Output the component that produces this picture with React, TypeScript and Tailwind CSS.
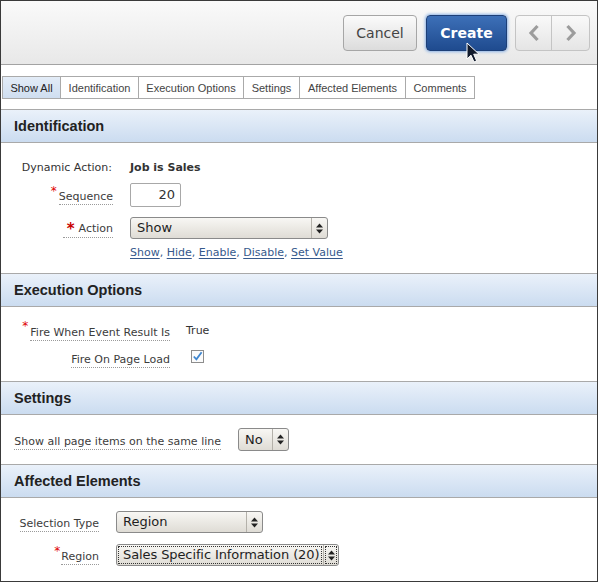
import React from "react";

function Arrows() {
  return (
    <svg width="7" height="11" viewBox="0 0 7 11" className="block">
      <path d="M0 4.5 L3.5 0.5 L7 4.5 Z" fill="#222" />
      <path d="M0 6.5 L3.5 10.5 L7 6.5 Z" fill="#222" />
    </svg>
  );
}

function Select({
  value,
  className,
  focus = false,
}: {
  value: string;
  className: string;
  focus?: boolean;
}) {
  return (
    <div
      className={`flex items-stretch rounded-[3px] border border-[#8a8a8a] bg-gradient-to-b from-[#f8f7f4] to-[#dfdcd5] text-[13px] text-[#1e1e1e] ${className}`}
    >
      <div className={`flex flex-1 items-center whitespace-nowrap ${focus ? "p-[1px]" : "overflow-hidden p-[2px]"}`}>
        <div
          className={`flex h-full w-full items-center ${focus ? "pl-[5px] tracking-[-0.1px] outline outline-1 outline-dotted outline-[#333] -outline-offset-1" : "pl-[4px]"}`}
        >
          {value}
        </div>
      </div>
      <div className={`flex items-center justify-center border-l border-[#b4b1aa] ${focus ? "w-[15px] p-[1px]" : "w-[16px] p-[2px]"}`}>
        <div
          className={`flex h-full w-full items-center justify-center ${focus ? "outline outline-1 outline-dotted outline-[#333] -outline-offset-1" : ""}`}
        >
          <Arrows />
        </div>
      </div>
    </div>
  );
}

function Star({ className }: { className: string }) {
  return (
    <span className={`absolute text-[12px] leading-none text-[#e00000] ${className}`}>*</span>
  );
}

function Field({ children }: { children: React.ReactNode }) {
  return (
    <span className="relative inline-block border-b border-dotted border-[#9a9a9a] pb-[1px] leading-[13px]">
      {children}
    </span>
  );
}

function RegionHeader({ title }: { title: string }) {
  return (
    <div className="flex h-[34px] items-center border-y border-[#a9a9a9] bg-gradient-to-b from-[#eaf1fa] to-[#cbdcf0] pl-[13px] pt-[1px] font-['Liberation_Sans',Arial,sans-serif] text-[14.5px] font-bold text-[#222]">
      {title}
    </div>
  );
}

const tabs = [
  { label: "Show All", w: "w-[57px]" },
  { label: "Identification", w: "w-[78px]" },
  { label: "Execution Options", w: "w-[105px]" },
  { label: "Settings", w: "w-[56px]" },
  { label: "Affected Elements", w: "w-[106px]" },
  { label: "Comments", w: "w-[69px]" },
];

export default function App() {
  return (
    <div className="relative flex h-[582px] w-[598px] flex-col overflow-hidden border border-[#3a3a3a] bg-white font-['DejaVu_Sans',sans-serif] text-[11px] text-[#3c3c3c]">
      {/* button bar */}
      <div className="flex h-[64px] items-center justify-end gap-[8px] border-b border-[#a3a3a3] bg-gradient-to-b from-[#fafafa] to-[#e8e8e8] pr-[7px] pt-[1px]">
        <button className="h-[36px] w-[74px] rounded-[4px] border border-[#a6a6a6] bg-gradient-to-b from-[#fbfbfb] to-[#dcdcdc] text-[14px] text-[#444]">
          Cancel
        </button>
        <button className="ml-[1px] h-[36px] w-[81px] rounded-[4px] border border-[#1d3f77] bg-gradient-to-b from-[#3d70b8] to-[#1f4b8f] text-[14px] font-bold text-white shadow-[0_0_3px_1px_#8db4e6]">
          Create
        </button>
        <div className="flex h-[36px] rounded-[4px] border border-[#c4c4c4] bg-gradient-to-b from-[#f9f9f9] to-[#e5e5e5]">
          <div className="flex w-[36px] items-center justify-center border-r border-[#c4c4c4]">
            <svg width="12" height="18" viewBox="0 0 12 18">
              <path d="M9.5 2 L3 9 L9.5 16" fill="none" stroke="#9c9c9c" strokeWidth="3.2" />
            </svg>
          </div>
          <div className="flex w-[37px] items-center justify-center">
            <svg width="12" height="18" viewBox="0 0 12 18">
              <path d="M2.5 2 L9 9 L2.5 16" fill="none" stroke="#9c9c9c" strokeWidth="3.2" />
            </svg>
          </div>
        </div>
      </div>

      {/* tabs */}
      <div className="ml-[1px] mt-[11px] flex h-[23px] self-start border border-[#aaaaaa] font-['Liberation_Sans',Arial,sans-serif] text-[11px] text-[#444]">
        {tabs.map((t, i) => (
          <div
            key={t.label}
            className={`flex items-center justify-center pt-[1px] ${t.w} ${i > 0 ? "border-l border-[#aaaaaa]" : ""} ${i === 0 ? "bg-gradient-to-b from-[#e3ecf7] to-[#cfdef0] text-[#222]" : "bg-white"}`}
          >
            {t.label}
          </div>
        ))}
      </div>

      {/* Identification */}
      <div className="mt-[10px]">
        <RegionHeader title="Identification" />
        <div className="h-[130px] pt-[15px]">
          <div className="flex h-[20px] items-center">
            <div className="w-[111px] text-right text-[#333]">Dynamic Action:</div>
            <div className="ml-[18px] font-bold text-[#333]">Job is Sales</div>
          </div>
          <div className="mt-[5px] flex h-[24px] items-center">
            <div className="w-[112px] pt-[5px] text-right">
              <Field>
                <Star className="left-[-8px] top-[-5px]" />
                Sequence
              </Field>
            </div>
            <div className="ml-[17px] flex h-[24px] w-[51px] items-center justify-end rounded-[2px] border border-[#a8a8a8] bg-white pr-[5px] text-[13px] text-[#333]">
              20
            </div>
          </div>
          <div className="mt-[10px] flex h-[22px] items-center">
            <div className="w-[112px] pt-[3px] text-right">
              <Field>
                <span className="mr-[4px] ml-[4px] align-[-2px] text-[15px] font-bold text-[#c80000]">*</span>
                Action
              </Field>
            </div>
            <Select value="Show" className="ml-[17px] h-[22px] w-[198px]" />
          </div>
          <div className="ml-[129px] mt-[7px] flex h-[14px] items-center pt-[1px] text-[#36598c]">
            <span className="underline underline-offset-2">Show</span>,&nbsp;
            <span className="underline underline-offset-2">Hide</span>,&nbsp;
            <span className="underline underline-offset-2">Enable</span>,&nbsp;
            <span className="underline underline-offset-2">Disable</span>,&nbsp;
            <span className="underline underline-offset-2">Set Value</span>
          </div>
        </div>
      </div>

      {/* Execution Options */}
      <div>
        <RegionHeader title="Execution Options" />
        <div className="h-[74px] pt-[14px]">
          <div className="flex h-[20px] items-center">
            <div className="w-[169px] pt-[4px] text-right">
              <Field>
                <Star className="left-[-8px] top-[-6px]" />
                Fire When Event Result Is
              </Field>
            </div>
            <div className="ml-[16px] pt-[1px] text-[#333]">True</div>
          </div>
          <div className="mt-[7px] flex h-[20px] items-center">
            <div className="w-[169px] pt-[4px] text-right">
              <Field>Fire On Page Load</Field>
            </div>
            <div className="ml-[21px] mt-[-3px]">
              <svg width="13" height="13" viewBox="0 0 13 13" className="block">
                <rect x="0.5" y="0.5" width="12" height="12" fill="#fbfbfb" stroke="#8d8d8d" />
                <path d="M2.8 6.5 L5.4 9.4 L10.6 2.2" fill="none" stroke="#3f86cf" strokeWidth="1.8" />
              </svg>
            </div>
          </div>
        </div>
      </div>

      {/* Settings */}
      <div>
        <RegionHeader title="Settings" />
        <div className="h-[49px] pt-[13px]">
          <div className="flex h-[23px] items-center">
            <div className="w-[220px] pt-[5px] text-right">
              <Field>Show all page items on the same line</Field>
            </div>
            <Select value="No" className="ml-[17px] h-[23px] w-[51px]" />
          </div>
        </div>
      </div>

      {/* Affected Elements */}
      <div>
        <RegionHeader title="Affected Elements" />
        <div className="pt-[13px]">
          <div className="flex h-[22px] items-center">
            <div className="w-[98px] pt-[5px] text-right">
              <Field>Selection Type</Field>
            </div>
            <Select value="Region" className="ml-[17px] h-[22px] w-[147px]" />
          </div>
          <div className="mt-[11px] flex h-[22px] items-center">
            <div className="w-[98px] pt-[5px] text-right">
              <Field>
                <Star className="left-[-7px] top-[-5px]" />
                Region
              </Field>
            </div>
            <Select value="Sales Specific Information (20)" className="ml-[17px] h-[22px] w-[223px]" focus />
          </div>
        </div>
      </div>

      {/* mouse pointer over Create */}
      <svg
        width="14"
        height="22"
        viewBox="0 0 14 22"
        className="absolute left-[465px] top-[41px]"
      >
        <path
          d="M1 1 L1 17 L5 13.2 L8 20 L10.6 18.8 L7.7 12.2 L13 12.2 Z"
          fill="#111a2c"
          stroke="#ffffff"
          strokeWidth="1"
          strokeLinejoin="round"
        />
      </svg>
    </div>
  );
}
